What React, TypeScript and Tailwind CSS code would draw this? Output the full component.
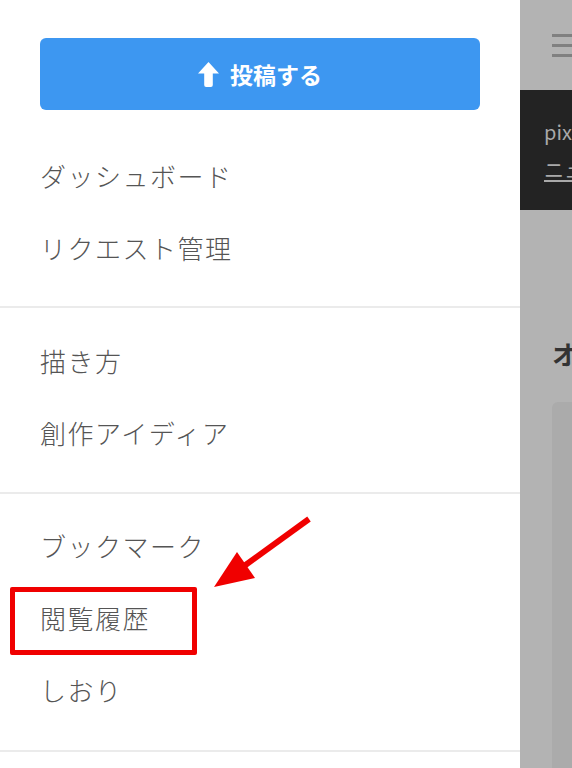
import { ReactNode } from 'react';

function NavItem({ children }: { children: ReactNode }) {
  return (
    <a className="flex h-[72px] items-center px-10 text-[26px] font-light tracking-[1.5px] text-[#555555]" href="#">
      {children}
    </a>
  );
}

export default function App() {
  return (
    <div
      className="relative flex h-[768px] w-[572px] overflow-hidden bg-white"
      style={{ fontFamily: '"Noto Sans CJK JP", "Noto Sans", sans-serif' }}
    >
      {/* Sidebar */}
      <aside className="w-[520px] shrink-0 bg-white">
        <div className="px-10 pt-[38px]">
          <button className="flex h-[72px] w-full items-center justify-center gap-[11px] rounded-md bg-[#3d97f1] text-[23px] font-bold text-white">
            <svg width="21" height="25" viewBox="0 0 22 26" fill="white">
              <path d="M11 0 L22 12 L15.5 12 L15.5 24 Q15.5 26 13.5 26 L8.5 26 Q6.5 26 6.5 24 L6.5 12 L0 12 Z" />
            </svg>
            <span>投稿する</span>
          </button>
        </div>

        <nav className="mt-[29px] pb-[23px]">
          <NavItem>ダッシュボード</NavItem>
          <NavItem>リクエスト管理</NavItem>
        </nav>
        <nav className="border-t-2 border-[#ebebeb] pb-[24px] pt-[16px]">
          <NavItem>描き方</NavItem>
          <NavItem>創作アイディア</NavItem>
        </nav>
        <nav className="border-t-2 border-[#ebebeb] pb-[25px] pt-[15px]">
          <NavItem>ブックマーク</NavItem>
          <NavItem>閲覧履歴</NavItem>
          <NavItem>しおり</NavItem>
        </nav>
        <div className="border-t-2 border-[#ebebeb]" />
      </aside>

      {/* Page behind the overlay */}
      <main className="flex-1 overflow-hidden bg-[#b3b3b3]">
        <div className="flex h-[90px] items-center pl-8">
          <div className="flex w-[30px] shrink-0 flex-col gap-[7px]">
            <span className="h-[3px] bg-[#808080]" />
            <span className="h-[3px] bg-[#808080]" />
            <span className="h-[3px] bg-[#808080]" />
          </div>
        </div>
        <div className="h-[120px] whitespace-nowrap bg-[#232323] pl-6 pt-[23px] text-[20px] leading-[38px] text-[#a9a9a9]">
          <p>pixiv Sketch</p>
          <p className="underline decoration-[#a9a9a9] underline-offset-2">ニュース</p>
        </div>
        <h2 className="mt-[124px] whitespace-nowrap pl-8 text-[26px] font-bold text-[#333333]">オススメ</h2>
        <div className="ml-8 mt-[29px] h-[400px] w-[300px] rounded-tl-md bg-[#ababab]" />
      </main>

      {/* Annotation */}
      <div className="absolute left-[10px] top-[587px] h-[68px] w-[187px] rounded-[2px] border-[5px] border-[#f00000]" />
      <svg className="absolute left-0 top-0" width="572" height="768" viewBox="0 0 572 768">
        <line x1="309" y1="519" x2="240" y2="569" stroke="#f00000" strokeWidth="6" />
        <polygon points="214,587 237,552 255,578" fill="#f00000" />
      </svg>
    </div>
  );
}
